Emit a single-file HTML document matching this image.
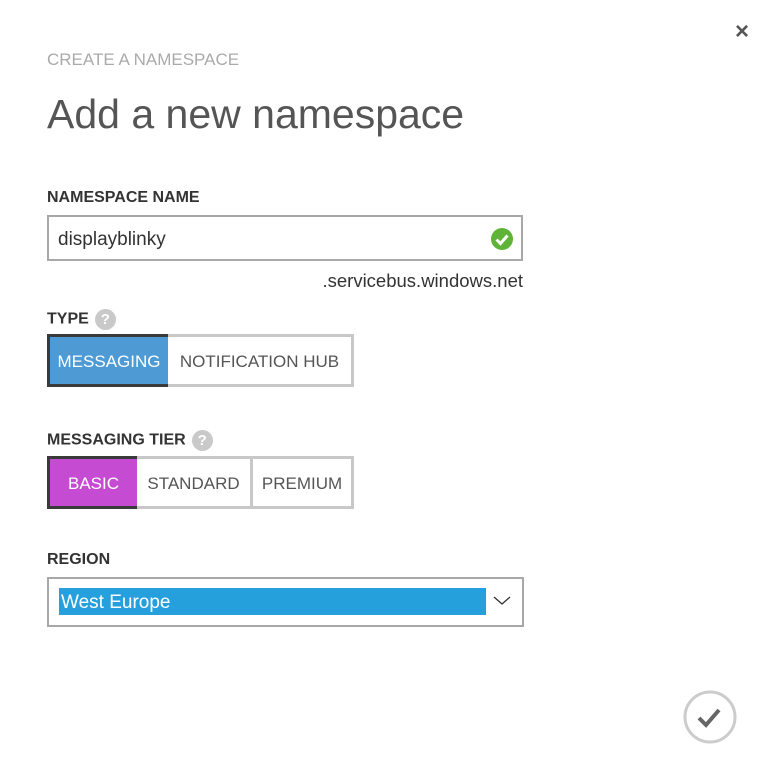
<!DOCTYPE html>
<html><head><style>
body{margin:0;width:774px;height:781px;background:#fff;position:relative;overflow:hidden;font-family:"Segoe UI","Liberation Sans",sans-serif;color:#333}
.a{position:absolute;white-space:nowrap}
.lbl{font-size:16px;font-weight:bold;color:#333}
.btn{position:absolute;box-sizing:border-box;border:3px solid #c8c8c8;font-size:17px;color:#555;display:flex;align-items:center;justify-content:center;background:#fff;padding-top:3px}
.q{display:inline-block;width:21px;height:21px;border-radius:50%;background:#c9c9c9;color:#fff;font-size:15px;font-weight:bold;text-align:center;line-height:21px;vertical-align:middle;margin-left:6px}
</style></head><body>
<div class="a" style="left:735px;top:18px;font-size:24px;font-weight:bold;color:#555">×</div>
<div class="a" style="left:47px;top:50px;font-size:17px;color:#aaa">CREATE A NAMESPACE</div>
<div class="a" style="left:47px;top:91px;font-size:41px;font-weight:300;color:#555">Add a new namespace</div>

<div class="a lbl" style="left:47px;top:189px">NAMESPACE NAME</div>
<div class="a" style="left:47px;top:215px;width:476px;height:46px;box-sizing:border-box;border:2px solid #a8a8a8"></div>
<div class="a" style="left:58px;top:229px;font-size:19px;color:#333">displayblinky</div>
<svg class="a" style="left:490px;top:227px" width="24" height="24"><circle cx="12" cy="12" r="11" fill="#5fb336"/><path d="M6.5 12.5l4 4 7-8" stroke="#fff" stroke-width="3" fill="none"/></svg>
<div class="a" style="right:251px;top:270px;font-size:18.5px;color:#333">.servicebus.windows.net</div>

<div class="a lbl" style="left:47px;top:309px">TYPE<span class="q">?</span></div>
<div class="btn" style="left:47px;top:334px;width:124px;height:53px;background:#4d9ad5;border-color:#3a3a3a;color:#fff">MESSAGING</div>
<div class="btn" style="left:168px;top:334px;width:186px;height:53px;border-left:none">NOTIFICATION HUB</div>

<div class="a lbl" style="left:47px;top:430px">MESSAGING TIER<span class="q">?</span></div>
<div class="btn" style="left:47px;top:456px;width:93px;height:53px;background:#c54bd2;border-color:#3a3a3a;color:#fff">BASIC</div>
<div class="btn" style="left:137px;top:456px;width:116px;height:53px;border-left:none">STANDARD</div>
<div class="btn" style="left:250px;top:456px;width:104px;height:53px">PREMIUM</div>

<div class="a lbl" style="left:47px;top:551px">REGION</div>
<div class="a" style="left:47px;top:577px;width:477px;height:50px;box-sizing:border-box;border:2px solid #a8a8a8"></div>
<div class="a" style="left:59px;top:588px;width:427px;height:27px;background:#26a0dc"></div>
<div class="a" style="left:61px;top:592px;font-size:19px;color:#fff">West Europe</div>
<svg class="a" style="left:493px;top:595px" width="18" height="12"><path d="M1 2l8 7 8-7" stroke="#333" stroke-width="1.3" fill="none"/></svg>

<svg class="a" style="left:683px;top:690px" width="54" height="54"><circle cx="27" cy="27" r="25" fill="#fff" stroke="#ccc" stroke-width="3"/><path d="M16 28l7 7 13-15" stroke="#666" stroke-width="4" fill="none"/></svg>
</body></html>
